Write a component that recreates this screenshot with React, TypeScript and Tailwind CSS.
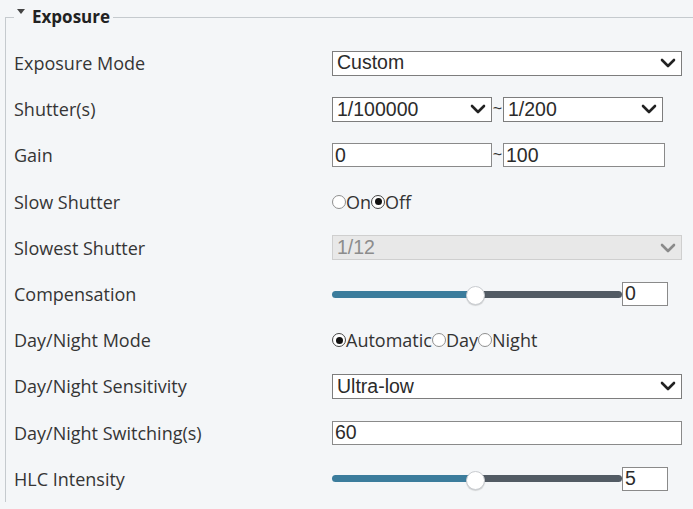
import React from "react";

const labelFont = { fontFamily: '"Open Sans", "Noto Sans", sans-serif' };

function Chevron({ color = "#222" }: { color?: string }) {
  return (
    <svg width="16" height="10" viewBox="0 0 16 10" className="shrink-0">
      <path d="M2 2 L8 8 L14 2" fill="none" stroke={color} strokeWidth="2.6" strokeLinecap="round" strokeLinejoin="round" />
    </svg>
  );
}

function Select({ value, w, disabled = false }: { value: string; w: string; disabled?: boolean }) {
  return (
    <div
      className={`${w} h-[25px] flex items-center justify-between pl-[4px] pr-[5px] border ${
        disabled ? "bg-[#e8e8e8] border-[#cfcfcf] text-[#8c8c8c]" : "bg-white border-[#7d7d7d] text-[#2b2b2b]"
      } font-['Liberation_Sans',Arial,sans-serif] text-[19.5px] leading-none`}
    >
      <span>{value}</span>
      <Chevron color={disabled ? "#8a8a8a" : "#222"} />
    </div>
  );
}

function Input({ value, w }: { value: string; w: string }) {
  return (
    <div className={`${w} h-[24px] flex items-center pl-[2px] bg-white border border-[#8a8a8a] text-[#2b2b2b] font-['Liberation_Sans',Arial,sans-serif] text-[19.5px] leading-none`}>
      {value}
    </div>
  );
}

function Tilde() {
  return <span className="w-[11px] text-center text-[#333] font-['Liberation_Sans',Arial,sans-serif] text-[16px] leading-none">~</span>;
}

function Radio({ checked, label }: { checked: boolean; label: string }) {
  return (
    <div className="flex items-center">
      <span
        className={`w-[14px] h-[14px] rounded-full bg-white border flex items-center justify-center ${
          checked ? "border-[#444]" : "border-[#8f8f8f]"
        }`}
      >
        {checked && <span className="w-[7px] h-[7px] rounded-full bg-[#111]" />}
      </span>
      <span className="text-[18px] text-[#333] leading-none" style={labelFont}>
        {label}
      </span>
    </div>
  );
}

function Slider({ value }: { value: string }) {
  return (
    <div className="flex items-center">
      <div className="relative w-[290px] h-[24px] flex items-center">
        <div className="flex w-full h-[7px]">
          <div className="w-[143px] h-full bg-[#3b7c9c] rounded-l-full" />
          <div className="flex-1 h-full bg-[#525b64] rounded-r-full" />
        </div>
        <div className="absolute left-[134px] top-[4px] w-[19px] h-[19px] rounded-full bg-white border border-[#c9ccd0] shadow-[0_1px_1px_rgba(0,0,0,0.15)]" />
      </div>
      <Input value={value} w="w-[46px]" />
    </div>
  );
}

function Row({ label, children }: { label: string; children: React.ReactNode }) {
  return (
    <div className="flex items-center h-[46.2px]">
      <div className="w-[318px] shrink-0 text-[18px] text-[#353535] leading-none" style={labelFont}>
        {label}
      </div>
      <div className="flex items-center">{children}</div>
    </div>
  );
}

export default function App() {
  return (
    <div className="w-[693px] h-[509px] overflow-hidden bg-[#f4f6f8]">
      <fieldset className="mt-[6px] ml-[5px] w-[720px] border-0 border-t border-l border-[#c5cace] pl-[8px] pt-[12px]">
        <legend className="flex items-start px-[3px] text-[17px] font-bold text-[#222] leading-[22px]" style={labelFont}>
          <svg width="8" height="6" viewBox="0 0 8 6" className="mt-[3px] mr-[7px]">
            <path d="M0 0 L8 0 L4 5 Z" fill="#444" />
          </svg>
          <span>Exposure</span>
        </legend>
        <Row label="Exposure Mode">
          <Select value="Custom" w="w-[350px]" />
        </Row>
        <Row label="Shutter(s)">
          <Select value="1/100000" w="w-[160px]" />
          <Tilde />
          <Select value="1/200" w="w-[160px]" />
        </Row>
        <Row label="Gain">
          <Input value="0" w="w-[160px]" />
          <Tilde />
          <Input value="100" w="w-[162px]" />
        </Row>
        <Row label="Slow Shutter">
          <Radio checked={false} label="On" />
          <Radio checked={true} label="Off" />
        </Row>
        <Row label="Slowest Shutter">
          <Select value="1/12" w="w-[350px]" disabled />
        </Row>
        <Row label="Compensation">
          <Slider value="0" />
        </Row>
        <Row label="Day/Night Mode">
          <Radio checked={true} label="Automatic" />
          <Radio checked={false} label="Day" />
          <Radio checked={false} label="Night" />
        </Row>
        <Row label="Day/Night Sensitivity">
          <Select value="Ultra-low" w="w-[350px]" />
        </Row>
        <Row label="Day/Night Switching(s)">
          <Input value="60" w="w-[350px]" />
        </Row>
        <Row label="HLC Intensity">
          <Slider value="5" />
        </Row>
      </fieldset>
    </div>
  );
}
